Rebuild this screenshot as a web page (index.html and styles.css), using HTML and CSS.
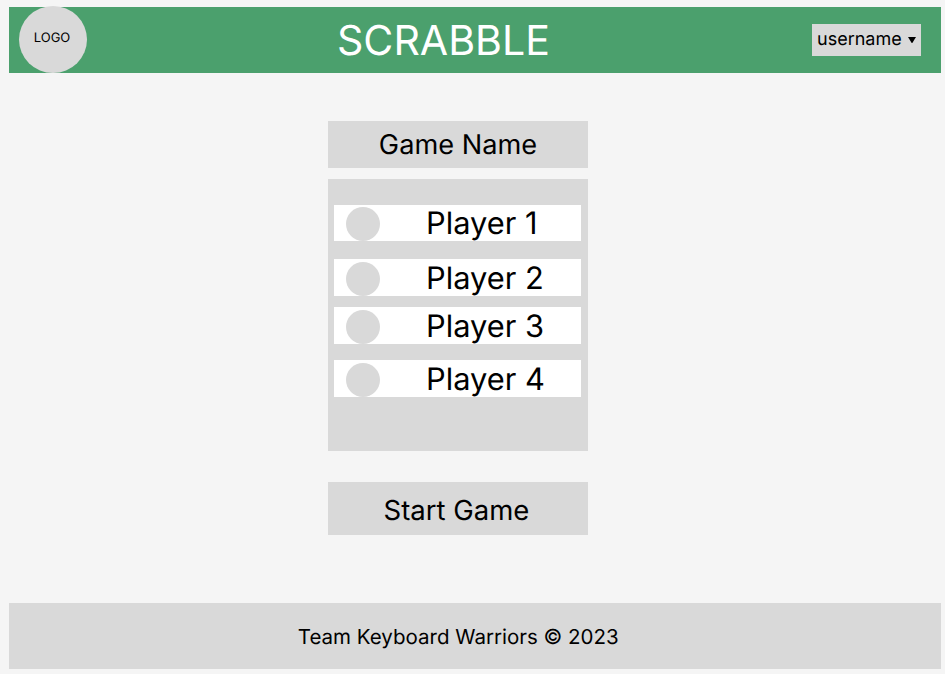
FILE: index.html
```html
<!DOCTYPE html>
<html lang="en">
<head>
<meta charset="utf-8">
<title>Scrabble</title>
<link rel="stylesheet" href="styles.css">
</head>
<body>
<header class="header">
  <div class="logo">LOGO</div>
  <h1 class="title">SCRABBLE</h1>
  <button class="user">username <svg class="caret" viewBox="0 0 8 6.5"><path d="M0 0H8L4 6.5Z"/></svg></button>
</header>
<main class="lobby">
  <h2 class="game-name">Game Name</h2>
  <ul class="players">
    <li class="player"><span class="avatar"></span>Player 1</li>
    <li class="player"><span class="avatar"></span>Player 2</li>
    <li class="player"><span class="avatar"></span>Player 3</li>
    <li class="player"><span class="avatar"></span>Player 4</li>
  </ul>
  <button class="start">Start Game</button>
</main>
<footer class="footer">Team Keyboard Warriors © 2023</footer>
</body>
</html>
```
FILE: styles.css
```css
* { box-sizing: border-box; margin: 0; padding: 0; }
body { height: 674px; padding: 6.5px 4.5px 5px 9px; background: #f5f5f5; color: #000; font-family: Inter, "Liberation Sans", sans-serif; text-rendering: geometricPrecision; display: flex; flex-direction: column; overflow: hidden; }
button { border: 0; font: inherit; color: inherit; text-rendering: inherit; }
h1, h2 { font-weight: 400; }
.header { flex: none; height: 66.5px; display: flex; align-items: center; background: #4ba06d; }
.logo { width: 68px; height: 67px; margin-left: 9.5px; padding: 0 1px 3px 0; border-radius: 50%; background: #d9d9d9; display: flex; align-items: center; justify-content: center; font-size: 13px; }
.title { margin-left: 250.5px; font-size: 41.1px; line-height: 50px; color: #fff; white-space: nowrap; }
.user { width: 109.5px; height: 32px; margin: 0 19.5px 0 auto; padding: 0 5px 1px 5.5px; background: #d9d9d9; display: flex; align-items: center; justify-content: space-between; font-size: 18px; }
.caret { width: 8px; height: 6.5px; margin-top: 1px; fill: #000; }
.lobby { width: 260px; margin: 48px 0 0 319px; display: flex; flex-direction: column; }
.game-name, .start { display: flex; align-items: center; justify-content: center; background: #d9d9d9; font-size: 27.2px; }
.game-name { height: 46.5px; }
.players { height: 271.6px; margin-top: 11.7px; padding: 25.8px 7px 0 6px; background: #d9d9d9; list-style: none; }
.player { height: 36.4px; margin-bottom: 18px; padding: 1.2px 0 0 12px; background: #fff; display: flex; align-items: center; font-size: 30.8px; white-space: nowrap; }
.player + .player { padding-top: 2px; }
.player:nth-child(2) { margin-bottom: 11.4px; }
.player:nth-child(3) { margin-bottom: 16.6px; }
.avatar { width: 34px; height: 34px; margin: 1.2px 46px 0 0; border-radius: 50%; background: #d9d9d9; }
.player + .player .avatar { margin-top: 0.4px; }
.start { height: 53px; margin-top: 31.2px; padding: 4px 3px 0 0; font-size: 27.5px; }
.footer { flex: none; height: 66px; margin-top: auto; padding-right: 33px; display: flex; align-items: center; justify-content: center; background: #d9d9d9; font-size: 20.5px; }
```
